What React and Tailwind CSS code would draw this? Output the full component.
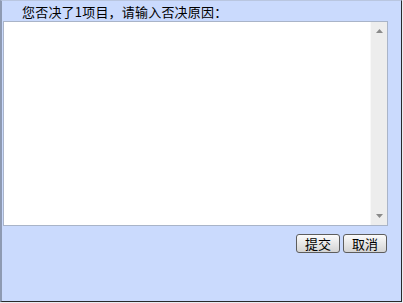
export default function App() {
  return (
    <div className="w-[403px] h-[303px] bg-[#e8ecf4] overflow-hidden" style={{ fontFamily: '"Noto Sans CJK SC", "Liberation Sans", sans-serif' }}>
      <div className="w-[402px] h-[302px] bg-[#cadafd] border-l-2 border-l-[#8e9ab2] border-r border-b border-r-[#2a2a2a] border-b-[#2a2a2a] border-t border-t-[#b9c6e0] flex flex-col">
        <div className="h-[20px] pl-[20px] flex items-center text-[13px] leading-none text-black tracking-[0.2px]">
          您否决了1项目，请输入否决原因：
        </div>
        <div className="ml-px w-[385px] h-[205px] bg-white border border-[#a9b4c8] flex justify-end">
          <div className="w-[17px] h-full bg-[#ededed] border-l border-[#f8f8f8] flex flex-col items-center justify-between py-[7px]">
            <svg width="7" height="4" viewBox="0 0 7 4"><path d="M3.5 0 L7 4 L0 4 Z" fill="#8a8a8a" /></svg>
            <svg width="7" height="4" viewBox="0 0 7 4"><path d="M0 0 L7 0 L3.5 4 Z" fill="#8a8a8a" /></svg>
          </div>
        </div>
        <div className="flex justify-end gap-[3px] pr-[14px] pt-[8px]">
          <button className="w-[44px] h-[19px] rounded-[3px] border border-[#5d5d5d] bg-gradient-to-b from-[#fbfbfb] to-[#d4d4d4] text-[13px] leading-none text-black flex items-center justify-center">提交</button>
          <button className="w-[44px] h-[19px] rounded-[3px] border border-[#5d5d5d] bg-gradient-to-b from-[#fbfbfb] to-[#d4d4d4] text-[13px] leading-none text-black flex items-center justify-center">取消</button>
        </div>
      </div>
    </div>
  );
}
